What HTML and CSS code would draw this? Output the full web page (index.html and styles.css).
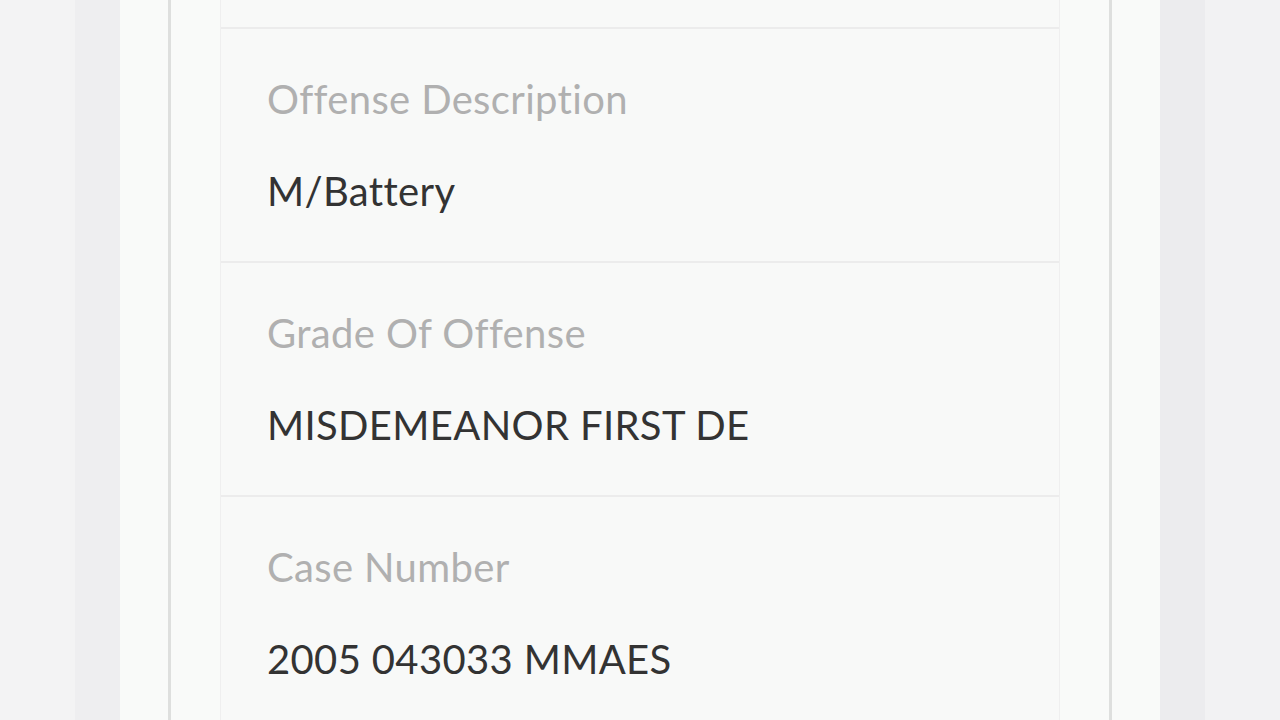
FILE: index.html
```html
<!DOCTYPE html>
<html>
<head>
<meta charset="utf-8">
<link rel="stylesheet" href="styles.css">
</head>
<body>
<div class="page">
  <div class="side side-left"><div class="band-a"></div><div class="band-b"></div></div>
  <div class="frame">
    <div class="frame-inner">
      <div class="card">
        <div class="row row-partial"></div>
        <div class="row">
          <div class="label">Offense Description</div>
          <div class="value">M/Battery</div>
        </div>
        <div class="row">
          <div class="label">Grade Of Offense</div>
          <div class="value">MISDEMEANOR FIRST DE</div>
        </div>
        <div class="row">
          <div class="label">Case Number</div>
          <div class="value">2005 043033 MMAES</div>
        </div>
      </div>
    </div>
  </div>
  <div class="side side-right"><div class="band-b"></div><div class="band-a"></div></div>
</div>
</body>
</html>
```
FILE: styles.css
```css
* { box-sizing: border-box; }
html, body { margin: 0; padding: 0; }
body {
  width: 1280px;
  height: 720px;
  overflow: hidden;
  background: #f2f2f3;
  font-family: Lato, "Open Sans", sans-serif;
}
.page {
  display: flex;
  height: 720px;
}
.side {
  width: 120px;
  display: flex;
  flex-shrink: 0;
}
.side-left .band-a { width: 75px; background: #f3f3f4; }
.side-left .band-b { width: 45px; background: #eeeef0; }
.side-right .band-b { width: 45px; background: #ececee; }
.side-right .band-a { width: 75px; background: #f2f2f3; }
.frame {
  flex: 1;
  background: #f9faf9;
  padding: 0 48px;
}
.frame-inner {
  height: 100%;
  border-left: 3px solid #dedfde;
  border-right: 3px solid #dedfde;
  padding: 0 49px;
}
.card {
  height: 100%;
  background: #f8f9f8;
  border-left: 1px solid #efefef;
  border-right: 1px solid #efefef;
}
.row {
  border-bottom: 2px solid #ececec;
  padding: 49px 46px 48px;
  display: flex;
  flex-direction: column;
  gap: 49px;
}
.row-partial {
  height: 29px;
  padding: 0;
}
.label, .value {
  font-size: 40px;
  line-height: 43px;
  letter-spacing: 0.35px;
  font-variant-ligatures: none;
  white-space: nowrap;
}
.label { color: #b0b0b0; }
.value { color: #333333; }
```
